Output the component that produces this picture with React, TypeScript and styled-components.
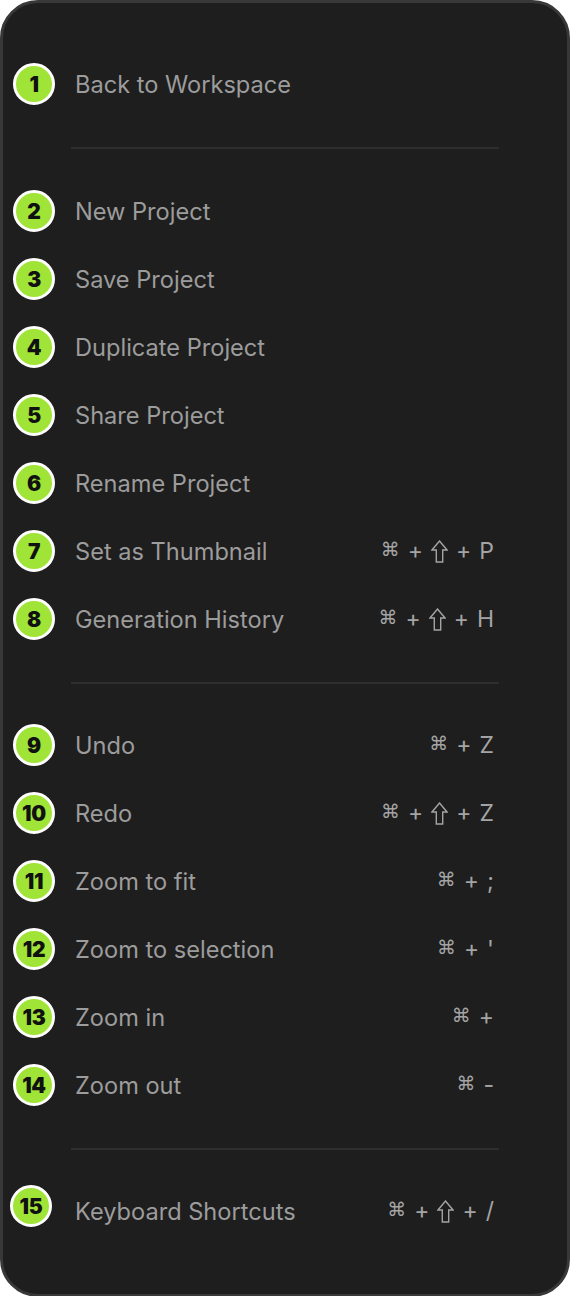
import styled, { createGlobalStyle } from 'styled-components';

const GlobalStyle = createGlobalStyle`
  html, body {
    margin: 0;
    padding: 0;
    background: #ffffff;
  }
  * {
    box-sizing: border-box;
  }
`;

const Panel = styled.div`
  width: 570px;
  background-color: #1e1e1e;
  border: 3px solid #383838;
  border-radius: 38px;
  padding: 47px 0 49px 0;
  display: flex;
  flex-direction: column;
  font-family: Inter, 'Noto Sans', 'DejaVu Sans', sans-serif;
`;

const Row = styled.div`
  height: 68px;
  display: flex;
  align-items: center;
  padding: 0 73px 0 10px;
`;

const Badge = styled.div<{ $dx?: number; $dy?: number }>`
  width: 42px;
  height: 42px;
  flex-shrink: 0;
  border-radius: 50%;
  border: 3px solid #ffffff;
  background-color: #9fe436;
  color: #111111;
  display: flex;
  align-items: center;
  justify-content: center;
  font-family: Inter, 'DejaVu Sans', sans-serif;
  font-weight: 900;
  font-size: 21px;
  letter-spacing: -0.3px;
  transform: translate(${(p) => p.$dx ?? 0}px, ${(p) => p.$dy ?? 0}px);
`;

const Label = styled.span`
  margin-left: 20px;
  flex: 1;
  font-size: 23.6px;
  color: #9c9c9c;
  white-space: nowrap;
`;

const Shortcut = styled.span`
  font-size: 23px;
  color: #a4a4a4;
  white-space: nowrap;
  display: flex;
  align-items: center;
  gap: 8px;
`;

const Cmd = styled.span`
  font-family: 'DejaVu Sans', sans-serif;
  font-size: 19px;
  position: relative;
  top: -2px;
`;

const ShiftIcon = () => (
  <svg width="17" height="23" viewBox="0 0 17 23" fill="none">
    <path
      d="M8.5 1 L16 10 H11.7 V22 H5.3 V10 H1 Z"
      stroke="#a4a4a4"
      strokeWidth="1.4"
      strokeLinejoin="miter"
    />
  </svg>
);

const Divider = styled.div<{ $tight?: boolean }>`
  height: 2px;
  margin: 29px 68px ${(p) => (p.$tight ? 27 : 28)}px 68px;
  background-color: #2e2e2e;
`;

type Item = {
  label: string;
  keys?: string[];
  dx?: number;
  dy?: number;
};

const sections: Item[][] = [
  [{ label: 'Back to Workspace' }],
  [
    { label: 'New Project' },
    { label: 'Save Project' },
    { label: 'Duplicate Project' },
    { label: 'Share Project' },
    { label: 'Rename Project' },
    { label: 'Set as Thumbnail', keys: ['cmd', '+', 'shift', '+', 'P'] },
    { label: 'Generation History', keys: ['cmd', '+', 'shift', '+', 'H'] },
  ],
  [
    { label: 'Undo', keys: ['cmd', '+', 'Z'] },
    { label: 'Redo', keys: ['cmd', '+', 'shift', '+', 'Z'] },
    { label: 'Zoom to fit', keys: ['cmd', '+', ';'] },
    { label: 'Zoom to selection', keys: ['cmd', '+', "'"] },
    { label: 'Zoom in', keys: ['cmd', '+'] },
    { label: 'Zoom out', keys: ['cmd', '-'] },
  ],
  [
    {
      label: 'Keyboard Shortcuts',
      keys: ['cmd', '+', 'shift', '+', '/'],
      dx: -3,
      dy: -5,
    },
  ],
];

function renderKey(k: string, i: number) {
  if (k === 'cmd') return <Cmd key={i}>⌘</Cmd>;
  if (k === 'shift') return <ShiftIcon key={i} />;
  return <span key={i}>{k}</span>;
}

function App() {
  let n = 0;
  return (
    <>
      <GlobalStyle />
      <Panel>
        {sections.map((items, s) => (
          <div key={s}>
            {s > 0 ? <Divider $tight={s > 1} /> : null}
            {items.map((item) => {
              n += 1;
              return (
                <Row key={item.label}>
                  <Badge $dx={item.dx} $dy={item.dy}>
                    {n}
                  </Badge>
                  <Label>{item.label}</Label>
                  {item.keys ? <Shortcut>{item.keys.map(renderKey)}</Shortcut> : null}
                </Row>
              );
            })}
          </div>
        ))}
      </Panel>
    </>
  );
}

export default App;
